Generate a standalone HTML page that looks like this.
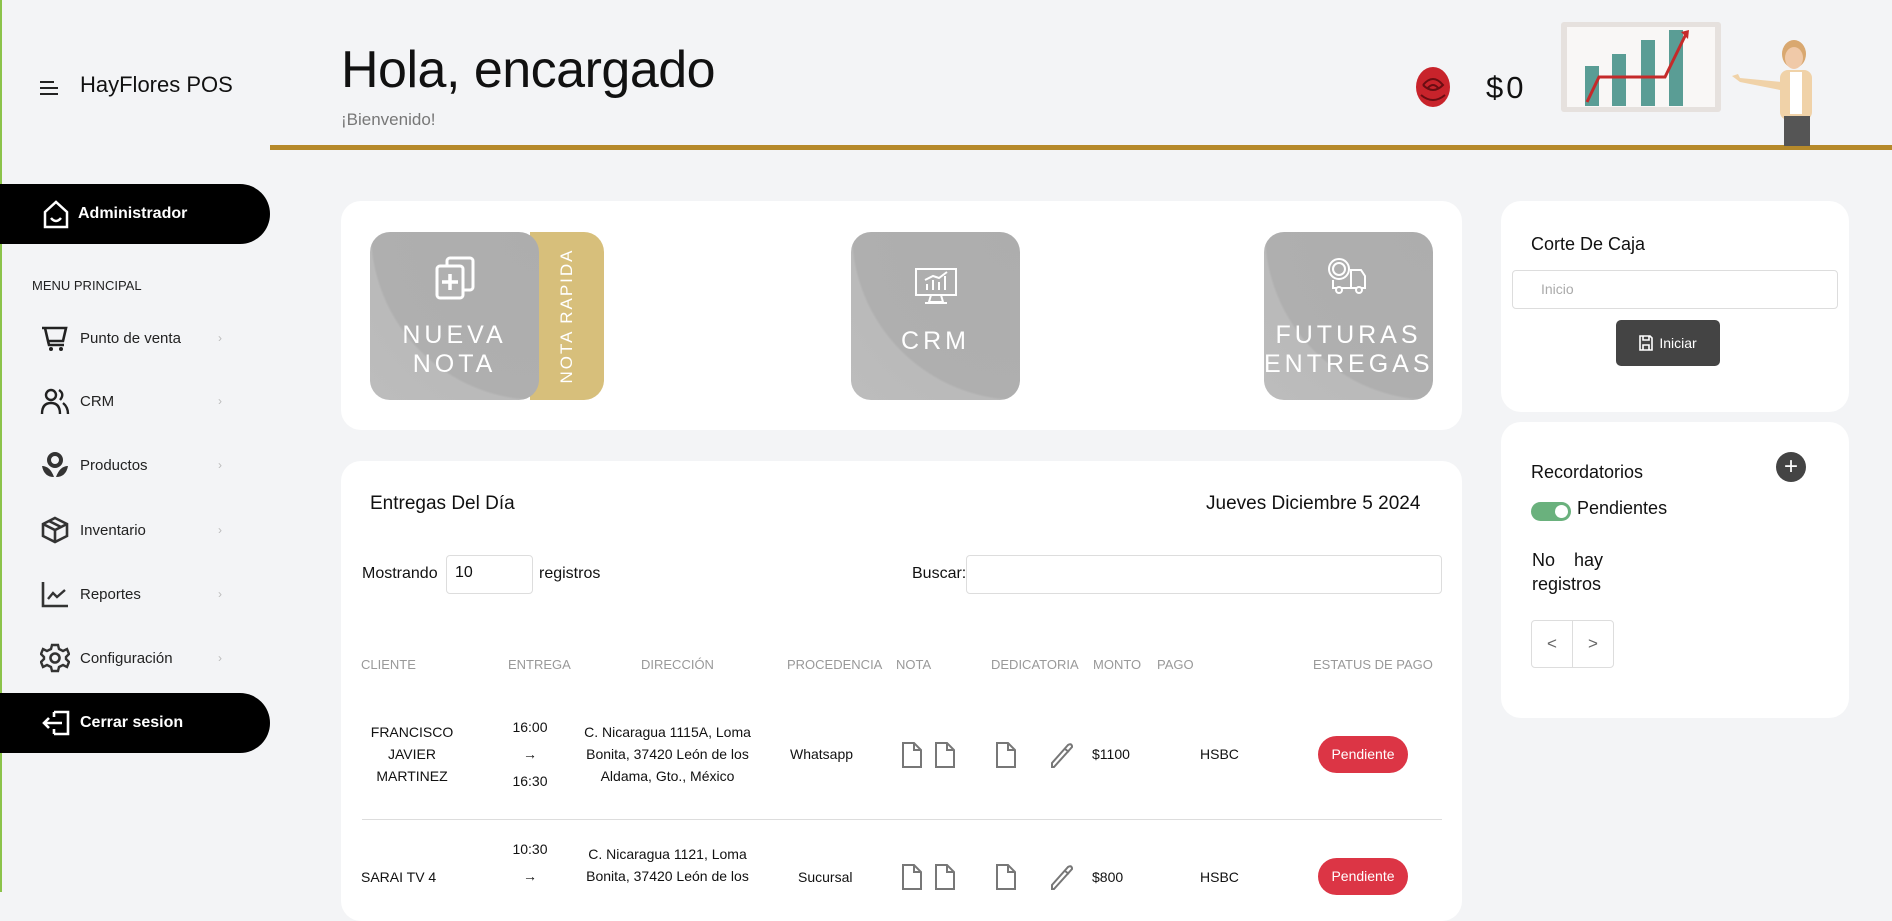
<!DOCTYPE html>
<html><head><meta charset="utf-8">
<style>
*{box-sizing:border-box;margin:0;padding:0}
body{width:1892px;height:892px;overflow:hidden;background:#f3f4f6;font-family:"Liberation Sans",sans-serif;color:#111;position:relative}
.a{position:absolute}
.card{position:absolute;background:#fff;border-radius:20px}
.menu{position:absolute;left:40px;font-size:15px;color:#222;display:flex;align-items:center}
.menu svg{width:30px;height:30px;margin-right:10px}
.chev{position:absolute;left:178px;color:#bbb;font-size:12px}
.pill{position:absolute;left:0;width:270px;height:60px;background:#000;border-radius:0 30px 30px 0;color:#fff;font-weight:bold;font-size:16px;display:flex;align-items:center;padding-left:42px}
.tile{position:absolute;top:232px;width:169px;height:168px;border-radius:20px;background:radial-gradient(circle at 100% 0%,#adadad 0%,#afafaf 70%,#bababa 71%,#bcbcbc 100%);color:#fff;text-align:center;font-size:25px;letter-spacing:4px;line-height:29px}
.th{position:absolute;top:657px;font-size:13px;color:#999}
.td{position:absolute;font-size:14px;color:#111;text-align:center;line-height:22px}
.btnp{position:absolute;left:1318px;width:90px;height:37px;background:#dc3545;color:#fff;border-radius:19px;font-size:14px;text-align:center;line-height:37px}
</style></head><body>
<div class="a" style="left:0;top:0;width:2px;height:892px;background:#8bc34a"></div>
<div class="a" style="left:40px;top:81px;width:18px">
<div style="height:2px;background:#222;margin-bottom:4px;width:14px"></div><div style="height:2px;background:#222;margin-bottom:4px"></div><div style="height:2px;background:#222"></div></div>
<div class="a" style="left:80px;top:72px;font-size:22px">HayFlores POS</div>
<div class="a" style="left:341px;top:40px;font-size:52px;letter-spacing:-0.5px">Hola, encargado</div>
<div class="a" style="left:341px;top:110px;font-size:17px;color:#777">¡Bienvenido!</div>
<div class="a" style="left:270px;top:145px;width:1622px;height:5px;background:#b5892a"></div>
<svg class="a" style="left:1413px;top:65px" width="40" height="44" viewBox="0 0 40 44"><ellipse cx="20" cy="22" rx="17" ry="20" fill="#c8232b"/><path d="M10 20 Q20 8 30 20 Q20 30 10 20 M14 24 Q20 16 26 24 M8 30 Q20 40 32 30" stroke="#6a0d12" stroke-width="2" fill="none"/></svg>
<div class="a" style="left:1486px;top:70px;font-size:31px;letter-spacing:3px">$0</div>
<div class="a" style="left:1561px;top:22px;width:160px;height:90px;background:#e6e1de;border-radius:3px"><div style="position:absolute;left:6px;top:5px;width:148px;height:80px;background:#f9f7f6"></div>
<svg style="position:absolute;left:0;top:0" width="160" height="90"><rect x="24" y="44" width="14" height="40" fill="#5a9d95"/><rect x="51" y="32" width="14" height="52" fill="#5a9d95"/><rect x="80" y="18" width="14" height="66" fill="#5a9d95"/><rect x="108" y="8" width="14" height="76" fill="#5a9d95"/><path d="M26 80 L38 55 L104 55 L125 12" stroke="#c52a2a" stroke-width="3" fill="none"/><path d="M120 10 L128 8 L127 17Z" fill="#c52a2a"/></svg></div>
<svg class="a" style="left:1730px;top:34px" width="120" height="112" viewBox="0 0 120 112"><ellipse cx="64" cy="20" rx="12" ry="14" fill="#d9a870"/><ellipse cx="64" cy="24" rx="9" ry="11" fill="#f0c9a8"/><rect x="50" y="36" width="32" height="50" rx="8" fill="#f0d2a8"/><rect x="60" y="38" width="12" height="42" fill="#fff"/><path d="M52 48 L10 44 L8 40 L2 42 L10 48 L50 56Z" fill="#f0d2a8"/><rect x="54" y="82" width="26" height="30" fill="#555"/></svg>
<div class="pill" style="top:184px"><svg width="28" height="30" viewBox="0 0 28 30" style="margin-right:8px"><path d="M3 13 L14 3 L25 13 V28 H3Z" fill="none" stroke="#fff" stroke-width="2.5"/><path d="M9 19 Q14 25 19 19" stroke="#fff" stroke-width="2.5" fill="none"/></svg>Administrador</div>
<div class="a" style="left:32px;top:278px;font-size:13px;color:#222">MENU PRINCIPAL</div>
<div class="menu" style="top:323px"><svg viewBox="0 0 30 30"><path d="M2 5 H26 L23 18 H8 L5 5 M8 18 L9 22 H24" stroke="#222" stroke-width="2.6" fill="none"/><circle cx="11" cy="26" r="2" fill="#222"/><circle cx="21" cy="26" r="2" fill="#222"/></svg>Punto de venta<span class="chev">›</span></div>
<div class="menu" style="top:386px"><svg viewBox="0 0 30 30"><circle cx="11" cy="9" r="5" stroke="#222" stroke-width="2.4" fill="none"/><path d="M2 28 Q2 17 11 17 Q20 17 20 28" stroke="#222" stroke-width="2.4" fill="none"/><path d="M19 4 Q25 8 20 14 M23 17 Q28 21 28 28" stroke="#222" stroke-width="2.4" fill="none"/></svg>CRM<span class="chev">›</span></div>
<div class="menu" style="top:450px"><svg viewBox="0 0 30 30"><circle cx="15" cy="10" r="6" stroke="#333" stroke-width="4" fill="none"/><path d="M2 16 Q10 16 14 27 Q4 27 2 16Z M28 16 Q20 16 16 27 Q26 27 28 16Z" fill="#333"/></svg>Productos<span class="chev">›</span></div>
<div class="menu" style="top:515px"><svg viewBox="0 0 30 30"><path d="M15 3 L27 9 V21 L15 27 L3 21 V9Z M3 9 L15 15 L27 9 M15 15 V27 M9 6 L21 12" stroke="#333" stroke-width="2.6" fill="none"/></svg>Inventario<span class="chev">›</span></div>
<div class="menu" style="top:579px"><svg viewBox="0 0 30 30"><path d="M3 3 V27 H28" stroke="#333" stroke-width="2.6" fill="none"/><path d="M8 20 L13 14 L17 18 L25 11" stroke="#333" stroke-width="2.4" fill="none"/></svg>Reportes<span class="chev">›</span></div>
<div class="menu" style="top:643px"><svg viewBox="0 0 30 30"><circle cx="15" cy="15" r="4.5" stroke="#333" stroke-width="2.6" fill="none"/><path d="M12 2 H18 L19 6 L23 8 L27 6 L29 11 L26 14 V16 L29 19 L27 24 L23 22 L19 24 L18 28 H12 L11 24 L7 22 L3 24 L1 19 L4 16 V14 L1 11 L3 6 L7 8 L11 6Z" stroke="#333" stroke-width="2.4" fill="none"/></svg>Configuración<span class="chev">›</span></div>
<div class="pill" style="top:693px"><svg width="30" height="30" viewBox="0 0 30 30" style="margin-right:8px"><path d="M12 4 H26 V26 H12 M12 4 V9 M12 26 V21 M2 15 H20 M7 10 L2 15 L7 20" stroke="#fff" stroke-width="2.6" fill="none"/></svg>Cerrar sesion</div>
<div class="card" style="left:341px;top:201px;width:1121px;height:229px"></div>
<div class="a" style="left:530px;top:232px;width:74px;height:168px;background:#d7bf7b;border-radius:0 20px 20px 0"></div>
<div class="a" style="left:567px;top:316px;transform:translate(-50%,-50%) rotate(-90deg);color:#fff;font-size:17px;letter-spacing:2px;white-space:nowrap">NOTA RAPIDA</div>
<div class="tile" style="left:370px"><svg width="44" height="46" viewBox="0 0 44 46" style="margin-top:24px"><rect x="14" y="2" width="26" height="32" rx="3" stroke="#fff" stroke-width="3" fill="none"/><rect x="4" y="10" width="26" height="32" rx="3" stroke="#fff" stroke-width="3" fill="#b0b0b0"/><path d="M17 18 V34 M9 26 H25" stroke="#fff" stroke-width="3.5"/></svg><div style="margin-top:12px">NUEVA<br>NOTA</div></div>
<div class="tile" style="left:851px"><svg width="46" height="40" viewBox="0 0 46 40" style="margin-top:34px"><rect x="3" y="3" width="40" height="26" stroke="#fff" stroke-width="2" fill="none"/><path d="M18 29 L16 36 H30 L28 29 M12 37 H34" stroke="#fff" stroke-width="2" fill="none"/><path d="M14 24 V18 M20 24 V14 M26 24 V16 M32 24 V10 M12 14 L20 10 L26 12 L34 6" stroke="#fff" stroke-width="2" fill="none"/></svg><div style="margin-top:14px">CRM</div></div>
<div class="tile" style="left:1264px"><svg width="48" height="40" viewBox="0 0 48 40" style="margin-top:24px"><circle cx="14" cy="13" r="10" stroke="#fff" stroke-width="2" fill="none"/><circle cx="14" cy="13" r="6" stroke="#fff" stroke-width="2" fill="none"/><path d="M8 24 V32 H40 V20 L36 14 H26 V32" stroke="#fff" stroke-width="2" fill="none"/><circle cx="14" cy="34" r="3" stroke="#fff" stroke-width="2" fill="#b0b0b0"/><circle cx="34" cy="34" r="3" stroke="#fff" stroke-width="2" fill="#b0b0b0"/></svg><div style="margin-top:18px">FUTURAS<br>ENTREGAS</div></div>
<div class="card" style="left:1501px;top:201px;width:348px;height:211px"></div>
<div class="a" style="left:1531px;top:234px;font-size:18px">Corte De Caja</div>
<div class="a" style="left:1512px;top:270px;width:326px;height:39px;border:1px solid #ddd;border-radius:4px;font-size:14px;color:#aaa;padding:10px 0 0 28px">Inicio</div>
<div class="a" style="left:1616px;top:320px;width:104px;height:46px;background:#444;border-radius:5px;color:#fff;font-size:14px;display:flex;align-items:center;justify-content:center"><svg width="14" height="16" viewBox="0 0 14 16" style="margin-right:6px"><path d="M1 1 H11 L13 3 V15 H1Z M4 1 V5 H10 V1 M4 15 V10 H10 V15" stroke="#fff" stroke-width="1.6" fill="none"/></svg>Iniciar</div>
<div class="card" style="left:1501px;top:422px;width:348px;height:296px"></div>
<div class="a" style="left:1531px;top:462px;font-size:18px">Recordatorios</div>
<div class="a" style="left:1776px;top:452px;width:30px;height:30px;border-radius:50%;background:#444;color:#fff;font-size:24px;text-align:center;line-height:29px">+</div>
<div class="a" style="left:1531px;top:502px;width:40px;height:19px;background:#6ab17d;border-radius:10px"><div style="position:absolute;right:3px;top:3px;width:13px;height:13px;border-radius:50%;background:#fff"></div></div>
<div class="a" style="left:1577px;top:498px;font-size:18px">Pendientes</div>
<div class="a" style="left:1532px;top:548px;font-size:18px;line-height:24px;word-spacing:14px">No hay<br><span style="word-spacing:0">registros</span></div>
<div class="a" style="left:1531px;top:620px;width:83px;height:48px;border:1px solid #ddd;border-radius:4px;display:flex;color:#666;font-size:17px"><div style="flex:1;text-align:center;line-height:46px;border-right:1px solid #ddd">&lt;</div><div style="flex:1;text-align:center;line-height:46px">&gt;</div></div>
<div class="card" style="left:341px;top:461px;width:1121px;height:460px"></div>
<div class="a" style="left:370px;top:493px;font-size:19px">Entregas Del Día</div>
<div class="a" style="left:1206px;top:493px;font-size:19px">Jueves Diciembre 5 2024</div>
<div class="a" style="left:362px;top:565px;font-size:16px">Mostrando</div>
<div class="a" style="left:446px;top:555px;width:87px;height:39px;border:1px solid #ddd;border-radius:4px;font-size:16px;padding:8px 0 0 8px">10</div>
<div class="a" style="left:539px;top:565px;font-size:16px">registros</div>
<div class="a" style="left:912px;top:565px;font-size:16px">Buscar:</div>
<div class="a" style="left:966px;top:555px;width:476px;height:39px;border:1px solid #ddd;border-radius:4px"></div>
<div class="th" style="left:361px">CLIENTE</div><div class="th" style="left:508px">ENTREGA</div><div class="th" style="left:641px">DIRECCIÓN</div><div class="th" style="left:787px">PROCEDENCIA</div><div class="th" style="left:896px">NOTA</div><div class="th" style="left:991px">DEDICATORIA</div><div class="th" style="left:1093px">MONTO</div><div class="th" style="left:1157px">PAGO</div><div class="th" style="left:1313px">ESTATUS DE PAGO</div>
<div class="td" style="left:362px;top:721px;width:100px">FRANCISCO<br>JAVIER<br>MARTINEZ</div>
<div class="td" style="left:505px;top:714px;width:50px;line-height:27px">16:00<br>→<br>16:30</div>
<div class="td" style="left:575px;top:721px;width:185px">C. Nicaragua 1115A, Loma<br>Bonita, 37420 León de los<br>Aldama, Gto., México</div>
<div class="td" style="left:790px;top:743px">Whatsapp</div>
<div class="td" style="left:1092px;top:743px">$1100</div>
<div class="td" style="left:1200px;top:743px">HSBC</div>
<div class="btnp" style="top:736px">Pendiente</div>
<div class="a" style="left:362px;top:819px;width:1080px;height:1px;background:#ddd"></div>
<div class="td" style="left:361px;top:866px">SARAI TV 4</div>
<div class="td" style="left:505px;top:836px;width:50px;line-height:27px">10:30<br>→<br></div>
<div class="td" style="left:575px;top:843px;width:185px">C. Nicaragua 1121, Loma<br>Bonita, 37420 León de los</div>
<div class="td" style="left:798px;top:866px">Sucursal</div>
<div class="td" style="left:1092px;top:866px">$800</div>
<div class="td" style="left:1200px;top:866px">HSBC</div>
<div class="btnp" style="top:858px">Pendiente</div>
<svg class="a" style="left:0;top:0" width="1892" height="892">
<defs><g id="d"><path d="M1 1 H12 L19 8 V25 H1Z M12 1 V8 H19" stroke="#777" stroke-width="2" fill="none"/></g>
<g id="p"><path d="M4 26 L2 26 L2 22 L18 4 Q21 2 22 5 L22 6 Z M15 8 L19 11" stroke="#777" stroke-width="2" fill="none"/></g></defs>
<use href="#d" x="902" y="742"/><use href="#d" x="935" y="742"/><use href="#d" x="996" y="742"/><use href="#p" x="1050" y="741"/>
<use href="#d" x="902" y="864"/><use href="#d" x="935" y="864"/><use href="#d" x="996" y="864"/><use href="#p" x="1050" y="863"/>
</svg>
</body></html>
